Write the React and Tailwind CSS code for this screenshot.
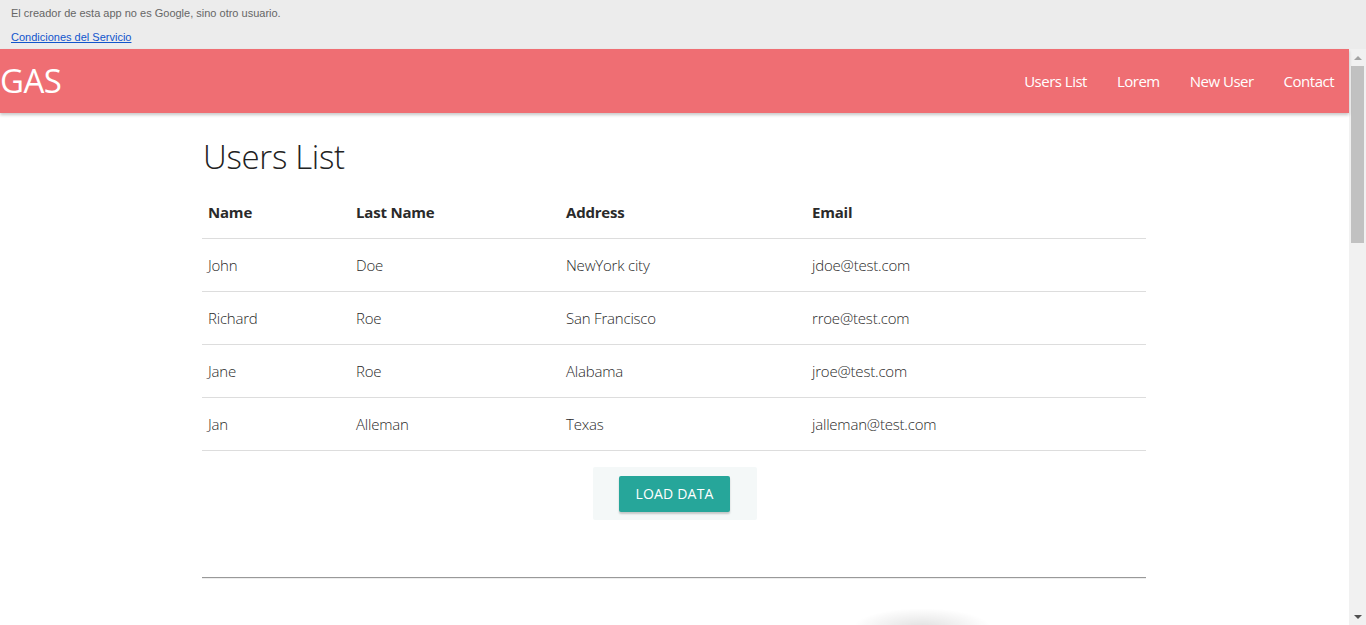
import React from "react";

const rows = [
  ["John", "Doe", "NewYork city", "jdoe@test.com"],
  ["Richard", "Roe", "San Francisco", "rroe@test.com"],
  ["Jane", "Roe", "Alabama", "jroe@test.com"],
  ["Jan", "Alleman", "Texas", "jalleman@test.com"],
];

const font = { fontFamily: '"Open Sans", "Noto Sans", sans-serif' };

export default function App() {
  return (
    <div className="h-[625px] w-[1366px] overflow-hidden flex flex-col bg-white">
      <div
        className="h-[49px] bg-[#ececec] pl-[11px] pt-[6px] text-[11px] leading-[14px]"
        style={{ fontFamily: '"Liberation Sans", Arial, sans-serif' }}
      >
        <div className="text-[#666]">El creador de esta app no es Google, sino otro usuario.</div>
        <a href="#" className="block mt-[10px] text-[#1155cc] underline">
          Condiciones del Servicio
        </a>
      </div>
      <div className="flex flex-1 min-h-0">
        <div className="flex-1 min-w-0 relative" style={font}>
          <nav className="h-[64px] bg-[#ef6e73] flex items-center justify-between text-white shadow-[0_2px_3px_rgba(0,0,0,0.22)] relative z-10">
            <div className="text-[33px] leading-[64px] tracking-[-0.5px] font-normal">GAS</div>
            <ul className="flex text-[15px] tracking-[-0.5px] pt-[1px]">
              <li className="px-[15px]">Users List</li>
              <li className="px-[15px]">Lorem</li>
              <li className="px-[15px]">New User</li>
              <li className="px-[15px]">Contact</li>
            </ul>
          </nav>
          <div className="w-[944px] ml-[202px]">
            <h4 className="text-[33px] font-light text-[#222] leading-[40px] mt-[24px] ml-[1px] tracking-[-0.3px]">
              Users List
            </h4>
            <table className="w-full mt-[10px] text-[15px] text-[#2a2a2a] tracking-[-0.2px]">
              <thead>
                <tr className="h-[51px] border-b border-[#ddd]">
                  <th className="w-[148px] text-left font-bold pl-[6px]">Name</th>
                  <th className="w-[210px] text-left font-bold pl-[6px]">Last Name</th>
                  <th className="w-[247px] text-left font-bold pl-[6px]">Address</th>
                  <th className="text-left font-bold pl-[5px]">Email</th>
                </tr>
              </thead>
              <tbody className="font-light">
                {rows.map((r) => (
                  <tr key={r[0]} className="h-[53px] border-b border-[#ddd]">
                    <td className="pl-[6px] pt-[2px]">{r[0]}</td>
                    <td className="pl-[6px] pt-[2px]">{r[1]}</td>
                    <td className="pl-[6px] pt-[2px]">{r[2]}</td>
                    <td className="pl-[5px] pt-[2px]">{r[3]}</td>
                  </tr>
                ))}
              </tbody>
            </table>
            <div className="flex justify-center mt-[16px] pl-[2px]">
              <div className="bg-[#f4f8f8] pl-[26px] pr-[27px] pt-[9px] pb-[8px] rounded-[2px]">
                <button className="h-[36px] w-[111px] bg-[#26a69a] text-white text-[14px] font-medium rounded-[2px] shadow-[0_2px_2px_rgba(0,0,0,0.2)] tracking-[0.2px]">
                  LOAD DATA
                </button>
              </div>
            </div>
            <hr className="mt-[57px] border-t border-t-[#999] border-b border-b-[#eee]" />
            <div className="flex mt-[29px] ml-[650px]">
              <div className="w-[140px] h-[40px] rounded-full bg-[radial-gradient(ellipse_at_center,rgba(0,0,0,0.12),rgba(0,0,0,0)_70%)]" />
            </div>
          </div>
        </div>
        <div className="w-[17px] bg-[#f1f1f1] flex flex-col items-center">
          <div className="h-[17px] flex items-center justify-center">
            <div className="w-0 h-0 border-l-[4px] border-r-[4px] border-b-[4px] border-l-transparent border-r-transparent border-b-[#a3a3a3]" />
          </div>
          <div className="w-[13px] h-[177px] bg-[#c1c1c1]" />
          <div className="flex-1" />
          <div className="h-[17px] flex items-center justify-center">
            <div className="w-0 h-0 border-l-[4px] border-r-[4px] border-t-[4px] border-l-transparent border-r-transparent border-t-[#505050]" />
          </div>
        </div>
      </div>
    </div>
  );
}
